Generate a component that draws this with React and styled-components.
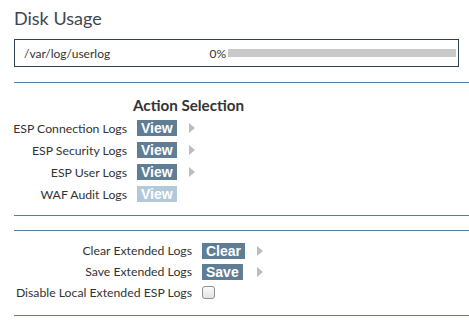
import React from 'react';
import styled, { createGlobalStyle } from 'styled-components';

const GlobalStyle = createGlobalStyle`
  body {
    margin: 0;
    background: #ffffff;
    font-family: Lato, "Open Sans", sans-serif;
    color: #333333;
  }
`;

const actionRows = [
  { label: 'ESP Connection Logs', button: 'View', arrow: true },
  { label: 'ESP Security Logs', button: 'View', arrow: true },
  { label: 'ESP User Logs', button: 'View', arrow: true },
  { label: 'WAF Audit Logs', button: 'View', disabled: true },
];

const extendedRows = [
  { label: 'Clear Extended Logs', button: 'Clear', arrow: true },
  { label: 'Save Extended Logs', button: 'Save', arrow: true },
  { label: 'Disable Local Extended ESP Logs', checkbox: true },
];

const App = () => {
  return (
    <Page>
      <GlobalStyle />
      <Title>Disk Usage</Title>
      <UsageBox>
        <Path>/var/log/userlog</Path>
        <Percent>0%</Percent>
        <Bar />
      </UsageBox>

      <Divider $top={15} />

      <Heading>Action Selection</Heading>
      <FormGrid $label={113} $button={42} $rowHeight={22}>
        {actionRows.map((row) => (
          <React.Fragment key={row.label}>
            <Label>{row.label}</Label>
            <Cell>
              <Button $disabled={row.disabled}>{row.button}</Button>
            </Cell>
            <Cell>{row.arrow && <Arrow />}</Cell>
          </React.Fragment>
        ))}
      </FormGrid>

      <Divider $top={10} />
      <Divider $top={14} />

      <FormGrid $label={178} $button={45} $rowHeight={21} $top={9}>
        {extendedRows.map((row) => (
          <React.Fragment key={row.label}>
            <Label>{row.label}</Label>
            <Cell>
              {row.checkbox ? <Checkbox /> : <Button>{row.button}</Button>}
            </Cell>
            <Cell>{row.arrow && <Arrow />}</Cell>
          </React.Fragment>
        ))}
      </FormGrid>

      <Divider $top={12} />
    </Page>
  );
};

const Page = styled.div`
  padding: 8px 0 0 14px;
  width: 455px;
`;

const Title = styled.h2`
  margin: 0 0 11px;
  font-size: 18px;
  line-height: 20px;
  font-weight: 400;
  color: #3d4650;
`;

const UsageBox = styled.div`
  box-sizing: border-box;
  width: 445px;
  height: 28px;
  border: 1px solid #2e4256;
  display: flex;
  align-items: center;
  padding: 0 2px 0 9px;
`;

const Path = styled.span`
  flex: 1;
  font-size: 12px;
  color: #333333;
`;

const Percent = styled.span`
  font-size: 12px;
  color: #333333;
  margin-right: 2px;
`;

const Bar = styled.div`
  width: 228px;
  height: 8px;
  background: #c9c9c9;
`;

const Divider = styled.hr`
  margin: ${({ $top }) => $top}px 0 0;
  border: 0;
  height: 1px;
  background: #5a7d99;
`;

const Heading = styled.h3`
  margin: 13px 0 3px 119px;
  font-size: 15.2px;
  line-height: 18px;
  font-weight: 700;
  color: #333333;
`;

const FormGrid = styled.div`
  display: grid;
  grid-template-columns: ${({ $label, $button }) => `${$label}px ${$button}px auto`};
  grid-auto-rows: ${({ $rowHeight }) => $rowHeight}px;
  column-gap: 10px;
  margin-top: ${({ $top = 0 }) => $top}px;
`;

const Label = styled.div`
  display: flex;
  align-items: center;
  justify-content: flex-end;
  font-size: 12.25px;
  color: #333333;
  white-space: nowrap;
`;

const Cell = styled.div`
  display: flex;
  align-items: center;
`;

const Button = styled.span`
  display: inline-block;
  height: 16px;
  line-height: 16px;
  padding: 0 4px;
  background: ${({ $disabled }) => ($disabled ? '#b3c9da' : '#5f7d95')};
  color: #ffffff;
  font-family: "Liberation Sans", Arial, sans-serif;
  font-weight: 700;
  font-size: 14px;
`;

const Arrow = styled.span`
  width: 0;
  height: 0;
  border-top: 5px solid transparent;
  border-bottom: 5px solid transparent;
  border-left: 6px solid #bdbdbd;
`;

const Checkbox = styled.span`
  box-sizing: border-box;
  width: 13px;
  height: 13px;
  border: 1px solid #8f8f8f;
  border-radius: 3px;
  background: linear-gradient(#fbfbfb, #e3e3e3);
`;

export default App;
